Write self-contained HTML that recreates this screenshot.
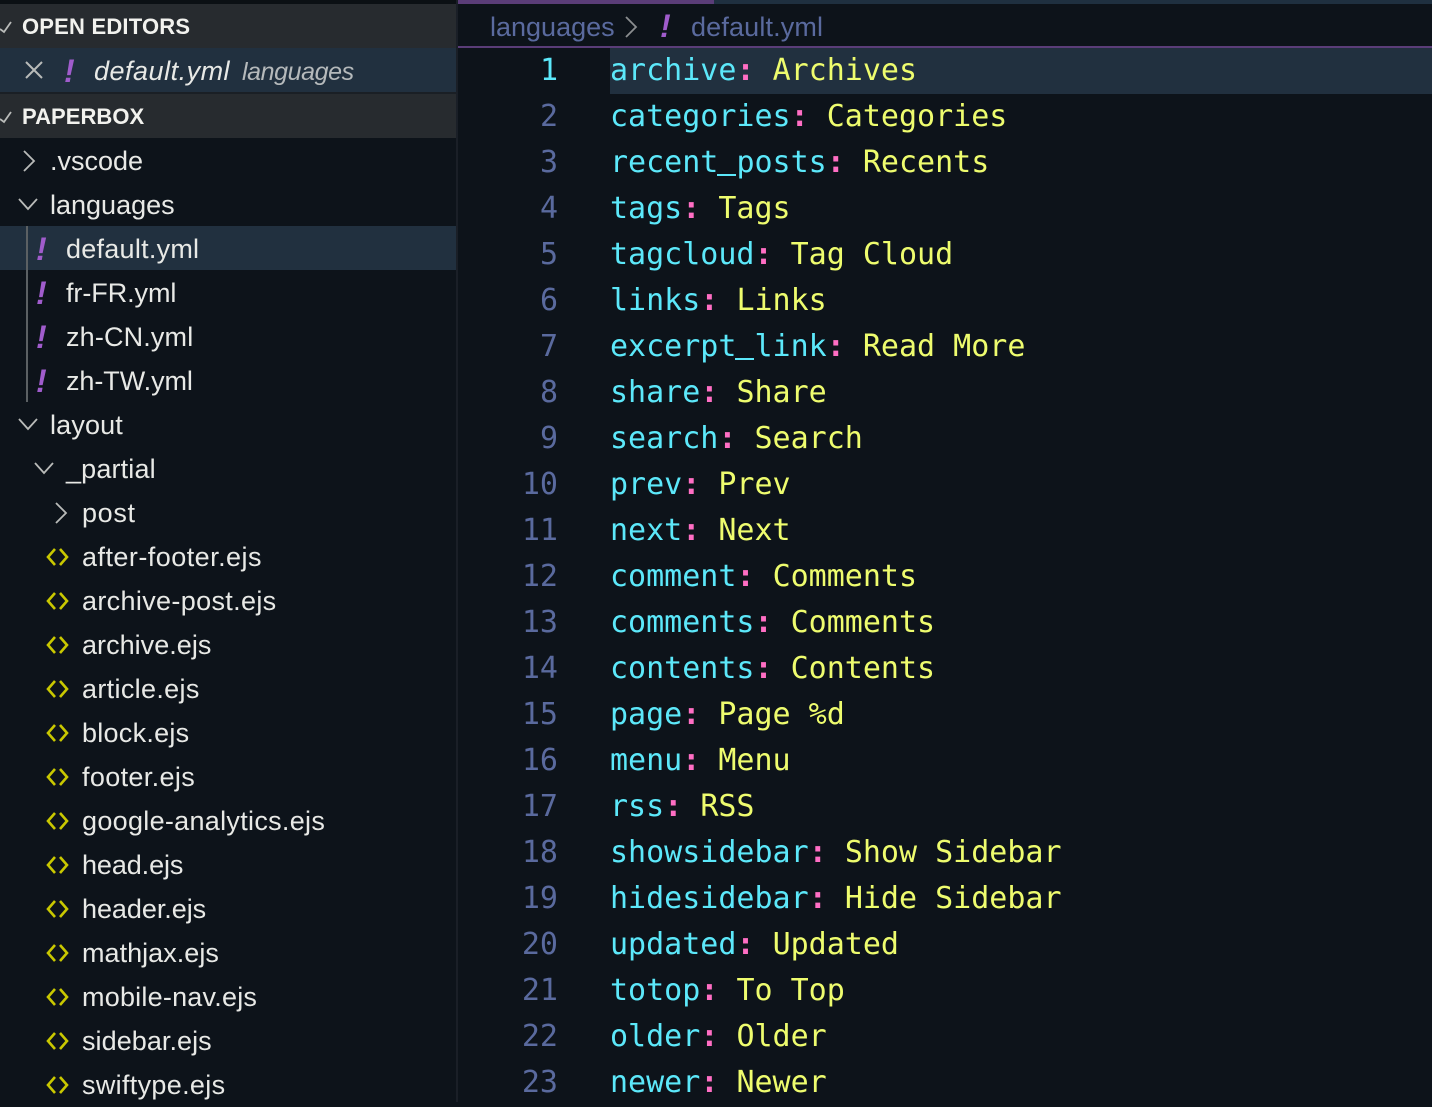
<!DOCTYPE html>
<html><head><meta charset="utf-8"><style>
html,body{margin:0;padding:0;background:#0d131a;width:1432px;height:1102px;overflow:hidden}
.a{position:absolute}
.t{position:absolute;font:27px/44px "Liberation Sans",sans-serif;color:#e8e9e6;white-space:pre;letter-spacing:.15px}
.h{position:absolute;font:bold 22px/44px "Liberation Sans",sans-serif;color:#f2f2ee;letter-spacing:.2px;white-space:pre}
.c{position:absolute;left:610px;font:30px/46px "DejaVu Sans Mono",monospace;white-space:pre;color:#5ce8fa}
.c i{font-style:normal;font-weight:bold;color:#ff6ec4}.c b{font-weight:normal;color:#eefc6e}.c u{text-decoration:none;color:transparent}
.n{position:absolute;left:491px;width:67px;text-align:right;font:30px/46px "DejaVu Sans Mono",monospace;color:#5a6a9e}
.e{position:absolute;font:italic bold 32px/44px "Liberation Sans",sans-serif;color:#a05ccc}
svg{position:absolute;overflow:visible}
</style></head><body>
<div class="a" style="left:0;top:0;width:456px;height:4px;background:#0b1014"></div>
<div class="a" style="left:0;top:4px;width:456px;height:44px;background:#272b2f"></div>
<div class="a" style="left:0;top:48px;width:456px;height:44px;background:#21303f"></div>
<div class="a" style="left:0;top:92px;width:456px;height:2px;background:#1a1f25"></div>
<div class="a" style="left:0;top:94px;width:456px;height:44px;background:#272b2f"></div>
<div class="a" style="left:0;top:226px;width:456px;height:44px;background:#21303f"></div>
<div class="a" style="left:456px;top:0;width:2px;height:1102px;background:#1a1f27"></div>
<div class="a" style="left:26px;top:226px;width:2px;height:176px;background:#5b6063"></div>
<div class="a" style="left:458px;top:0;width:256px;height:4px;background:#5a3d78"></div>
<div class="a" style="left:714px;top:0;width:718px;height:4px;background:#1f3040"></div>
<div class="a" style="left:458px;top:46px;width:974px;height:2px;background:#5a3d78"></div>
<div class="a" style="left:610px;top:48px;width:822px;height:46px;background:#21303f"></div>
<div class="a" style="left:717px;top:174px;width:19px;height:2px;background:#5ce8fa"></div>
<div class="a" style="left:735px;top:358px;width:19px;height:2px;background:#5ce8fa"></div>

<svg style="left:0;top:0" width="456" height="1102" fill="none" stroke="#b9bbb9" stroke-width="1.8">
<path d="M0 29l4 3 7-10M0 119l4 3 7-10"/>
<path d="M26 62l16 16M42 62L26 78" stroke-width="2"/>
<path d="M24 151l10 10-10 10M19 199l9 10 9-10M19 419l9 10 9-10M35 463l9 10 9-10M56 503l10 10-10 10"/>
</svg>
<svg style="left:0;top:0" width="456" height="1102" fill="none" stroke="#c9c800" stroke-width="2.6">
<path d="M55 549l-7 8 7 8M60 549l7 8-7 8"/>
<path d="M55 593l-7 8 7 8M60 593l7 8-7 8"/>
<path d="M55 637l-7 8 7 8M60 637l7 8-7 8"/>
<path d="M55 681l-7 8 7 8M60 681l7 8-7 8"/>
<path d="M55 725l-7 8 7 8M60 725l7 8-7 8"/>
<path d="M55 769l-7 8 7 8M60 769l7 8-7 8"/>
<path d="M55 813l-7 8 7 8M60 813l7 8-7 8"/>
<path d="M55 857l-7 8 7 8M60 857l7 8-7 8"/>
<path d="M55 901l-7 8 7 8M60 901l7 8-7 8"/>
<path d="M55 945l-7 8 7 8M60 945l7 8-7 8"/>
<path d="M55 989l-7 8 7 8M60 989l7 8-7 8"/>
<path d="M55 1033l-7 8 7 8M60 1033l7 8-7 8"/>
<path d="M55 1077l-7 8 7 8M60 1077l7 8-7 8"/>
</svg>

<div class="h" style="left:22px;top:5px">OPEN EDITORS</div>
<div class="h" style="left:22px;top:95px;letter-spacing:.05px">PAPERBOX</div>
<div class="e" style="left:64px;top:49px">!</div>
<div class="t" style="left:94px;top:49px;font-style:italic;letter-spacing:.5px">default.yml</div>
<div class="t" style="left:242px;top:50px;font-style:italic;font-size:25px;color:#b5b9bb;letter-spacing:-.4px">languages</div>

<div class="t" style="left:50px;top:139px;letter-spacing:0">.vscode</div>
<div class="t" style="left:50px;top:183px;letter-spacing:0">languages</div>
<div class="e" style="left:36px;top:227px">!</div><div class="t" style="left:66px;top:227px;letter-spacing:.25px">default.yml</div>
<div class="e" style="left:36px;top:271px">!</div><div class="t" style="left:66px;top:271px;letter-spacing:-.07px">fr-FR.yml</div>
<div class="e" style="left:36px;top:315px">!</div><div class="t" style="left:66px;top:315px">zh-CN.yml</div>
<div class="e" style="left:36px;top:359px">!</div><div class="t" style="left:66px;top:359px;letter-spacing:-.07px">zh-TW.yml</div>
<div class="t" style="left:50px;top:403px">layout</div>
<div class="t" style="left:66px;top:447px">_partial</div>
<div class="t" style="left:82px;top:491px;letter-spacing:.65px">post</div>
<div class="t" style="left:82px;top:535px;letter-spacing:.46px">after-footer.ejs</div>
<div class="t" style="left:82px;top:579px;letter-spacing:.34px">archive-post.ejs</div>
<div class="t" style="left:82px;top:623px;letter-spacing:.03px">archive.ejs</div>
<div class="t" style="left:82px;top:667px;letter-spacing:.33px">article.ejs</div>
<div class="t" style="left:82px;top:711px;letter-spacing:.26px">block.ejs</div>
<div class="t" style="left:82px;top:755px;letter-spacing:.35px">footer.ejs</div>
<div class="t" style="left:82px;top:799px;letter-spacing:.3px">google-analytics.ejs</div>
<div class="t" style="left:82px;top:843px;letter-spacing:-.1px">head.ejs</div>
<div class="t" style="left:82px;top:887px;letter-spacing:-.05px">header.ejs</div>
<div class="t" style="left:82px;top:931px;letter-spacing:.03px">mathjax.ejs</div>
<div class="t" style="left:82px;top:975px;letter-spacing:.22px">mobile-nav.ejs</div>
<div class="t" style="left:82px;top:1019px;letter-spacing:.06px">sidebar.ejs</div>
<div class="t" style="left:82px;top:1063px;letter-spacing:.32px">swiftype.ejs</div>

<div class="t" style="left:490px;top:5px;color:#5a6a9e;letter-spacing:0">languages</div>
<svg style="left:0;top:0" width="700" height="50" fill="none" stroke="#8b8e90" stroke-width="1.8"><path d="M626 17l10 10-10 10"/></svg>
<div class="e" style="left:660px;top:4px">!</div>
<div class="t" style="left:691px;top:5px;color:#5a6a9e">default.yml</div>

<div class="n" style="top:48px;color:#5ce8fa">1</div><div class="c" style="top:48px">archive<i>:</i> <b>Archives</b></div>
<div class="n" style="top:94px">2</div><div class="c" style="top:94px">categories<i>:</i> <b>Categories</b></div>
<div class="n" style="top:140px">3</div><div class="c" style="top:140px">recent<u>_</u>posts<i>:</i> <b>Recents</b></div>
<div class="n" style="top:186px">4</div><div class="c" style="top:186px">tags<i>:</i> <b>Tags</b></div>
<div class="n" style="top:232px">5</div><div class="c" style="top:232px">tagcloud<i>:</i> <b>Tag Cloud</b></div>
<div class="n" style="top:278px">6</div><div class="c" style="top:278px">links<i>:</i> <b>Links</b></div>
<div class="n" style="top:324px">7</div><div class="c" style="top:324px">excerpt<u>_</u>link<i>:</i> <b>Read More</b></div>
<div class="n" style="top:370px">8</div><div class="c" style="top:370px">share<i>:</i> <b>Share</b></div>
<div class="n" style="top:416px">9</div><div class="c" style="top:416px">search<i>:</i> <b>Search</b></div>
<div class="n" style="top:462px">10</div><div class="c" style="top:462px">prev<i>:</i> <b>Prev</b></div>
<div class="n" style="top:508px">11</div><div class="c" style="top:508px">next<i>:</i> <b>Next</b></div>
<div class="n" style="top:554px">12</div><div class="c" style="top:554px">comment<i>:</i> <b>Comments</b></div>
<div class="n" style="top:600px">13</div><div class="c" style="top:600px">comments<i>:</i> <b>Comments</b></div>
<div class="n" style="top:646px">14</div><div class="c" style="top:646px">contents<i>:</i> <b>Contents</b></div>
<div class="n" style="top:692px">15</div><div class="c" style="top:692px">page<i>:</i> <b>Page %d</b></div>
<div class="n" style="top:738px">16</div><div class="c" style="top:738px">menu<i>:</i> <b>Menu</b></div>
<div class="n" style="top:784px">17</div><div class="c" style="top:784px">rss<i>:</i> <b>RSS</b></div>
<div class="n" style="top:830px">18</div><div class="c" style="top:830px">showsidebar<i>:</i> <b>Show Sidebar</b></div>
<div class="n" style="top:876px">19</div><div class="c" style="top:876px">hidesidebar<i>:</i> <b>Hide Sidebar</b></div>
<div class="n" style="top:922px">20</div><div class="c" style="top:922px">updated<i>:</i> <b>Updated</b></div>
<div class="n" style="top:968px">21</div><div class="c" style="top:968px">totop<i>:</i> <b>To Top</b></div>
<div class="n" style="top:1014px">22</div><div class="c" style="top:1014px">older<i>:</i> <b>Older</b></div>
<div class="n" style="top:1060px">23</div><div class="c" style="top:1060px">newer<i>:</i> <b>Newer</b></div>
</body></html>
